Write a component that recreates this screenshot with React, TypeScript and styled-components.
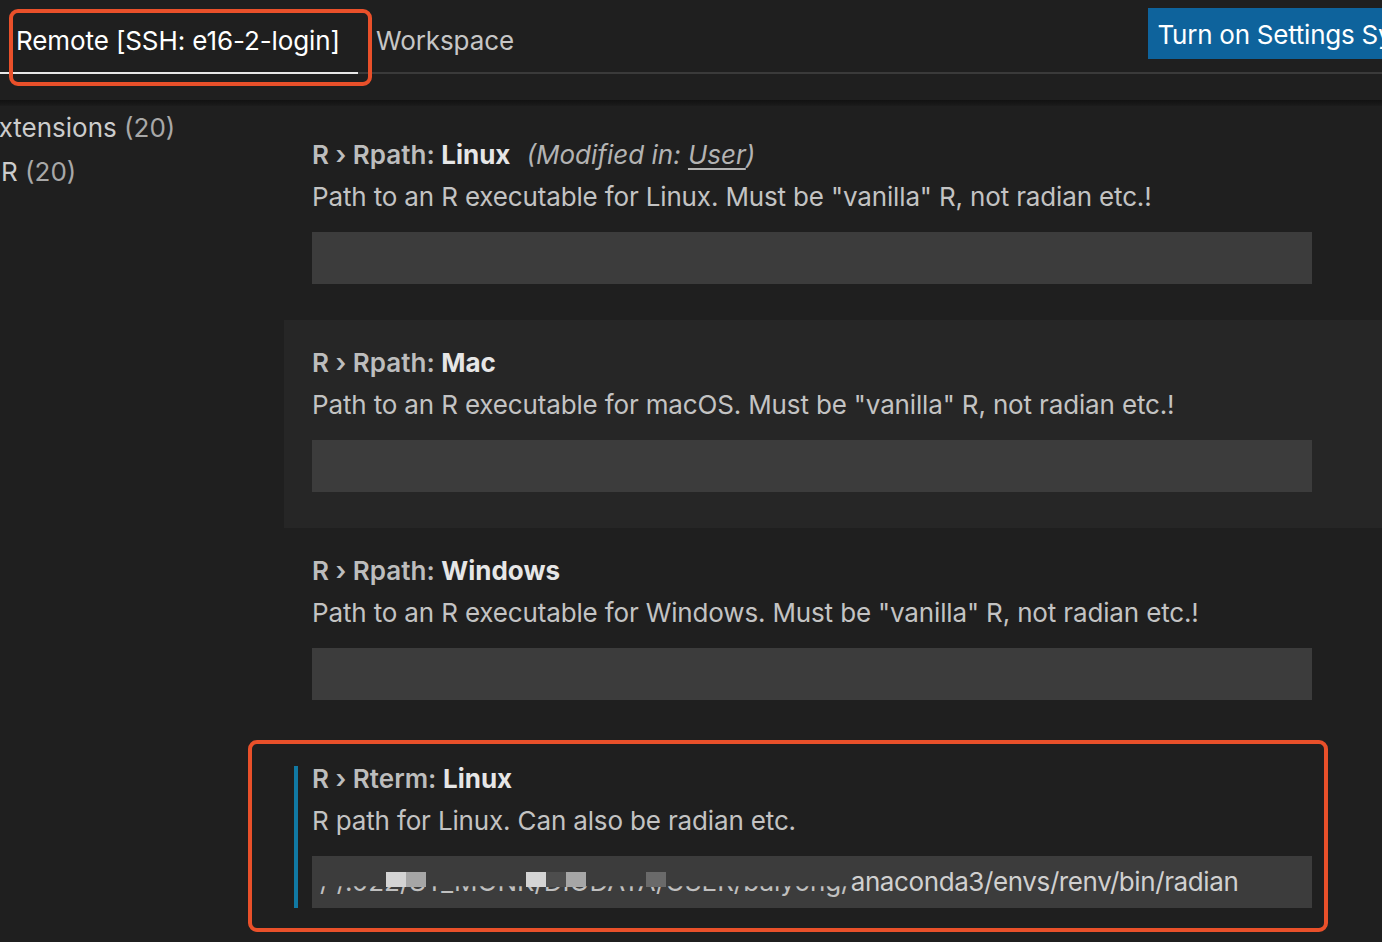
import React from "react";
import styled, { createGlobalStyle } from "styled-components";

const Global = createGlobalStyle`
  html, body { margin: 0; padding: 0; background: #1f1f1f; overflow: hidden; }
  body { font-family: Inter, "Noto Sans", sans-serif; -webkit-font-smoothing: antialiased; }
  #root { width: 1382px; height: 942px; position: relative; overflow: hidden; }
`;

const Page = styled.div`
  width: 1382px;
  height: 942px;
  position: relative;
  overflow: hidden;
  background: #1f1f1f;
  color: #cccccc;
  font-size: 26px;
`;

const Header = styled.div`
  height: 100px;
  display: flex;
  flex-direction: column;
`;

const TabBar = styled.div`
  width: 1432px;
  height: 72px;
  display: flex;
  align-items: stretch;
  border-bottom: 2px solid #3a3a3a;
`;

const Tab = styled.div<{ $active?: boolean }>`
  box-sizing: border-box;
  padding: 25px ${(p) => (p.$active ? "18px" : "0")} 0 ${(p) => (p.$active ? "16px" : "18px")};
  width: ${(p) => (p.$active ? "358px" : "auto")};
  line-height: 32px;
  color: ${(p) => (p.$active ? "#ffffff" : "#c6c6c6")};
  border-bottom: 2px solid ${(p) => (p.$active ? "#e8e8e8" : "transparent")};
  margin-bottom: -2px;
  white-space: nowrap;
  letter-spacing: -0.1px;
`;

const SyncButton = styled.div`
  margin-left: auto;
  margin-top: 8px;
  align-self: flex-start;
  flex: none;
  height: 51px;
  padding: 0 10px;
  background: #0e639c;
  color: #ffffff;
  line-height: 53px;
  white-space: nowrap;
  letter-spacing: -0.25px;
`;

const Shadow = styled.div`
  height: 6px;
  background: linear-gradient(#121212, #171717 60%, #1c1c1c);
`;

const Body = styled.div`
  display: flex;
  height: 836px;
`;

const Toc = styled.div`
  width: 284px;
  flex: none;
  overflow: hidden;
`;

const TocItem = styled.div<{ $indent: number }>`
  line-height: 44px;
  margin-left: ${(p) => p.$indent}px;
  white-space: nowrap;
  color: #cccccc;
`;

const Count = styled.span`
  color: #a8a8a8;
`;

const List = styled.div`
  flex: 1;
  display: flex;
  flex-direction: column;
  padding-top: 6px;
`;

const Item = styled.div<{ $hover?: boolean }>`
  height: 208px;
  box-sizing: border-box;
  padding: 28px 0 36px 0;
  display: flex;
  background: ${(p) => (p.$hover ? "#262626" : "transparent")};
`;

const FocusBar = styled.div<{ $on?: boolean }>`
  flex: none;
  width: 4px;
  margin: 2px 14px 0 10px;
  background: ${(p) => (p.$on ? "#1179a3" : "transparent")};
`;

const Content = styled.div`
  display: flex;
  flex-direction: column;
`;

const Title = styled.div`
  line-height: 30px;
  white-space: nowrap;
`;

const Category = styled.span`
  font-weight: 600;
  color: #bdbdbd;
`;

const Label = styled.span`
  font-weight: 700;
  color: #e6e6e6;
`;

const Modified = styled.span`
  font-style: italic;
  color: #b3b3b3;
  margin-left: 16px;
`;

const Link = styled.span`
  text-decoration: underline;
  text-underline-offset: 4px;
`;

const Desc = styled.div`
  margin-top: 12px;
  line-height: 30px;
  color: #c3c3c3;
  white-space: nowrap;
  letter-spacing: -0.15px;
`;

const Input = styled.div`
  margin-top: 20px;
  width: 1000px;
  height: 52px;
  box-sizing: border-box;
  background: #3c3c3c;
  color: #d0d0d0;
  padding: 0 8px;
  line-height: 52px;
  white-space: nowrap;
  position: relative;
  overflow: hidden;
  display: flex;
  letter-spacing: -0.4px;
`;

const Hidden = styled.span`
  color: #c0c0c0;
  clip-path: inset(58% 0 0 0);
  letter-spacing: 0;
`;

const Block = styled.span<{ $x: number; $w: number; $c: string }>`
  position: absolute;
  left: ${(p) => p.$x}px;
  top: 16px;
  width: ${(p) => p.$w}px;
  height: 15px;
  background: ${(p) => p.$c};
`;

const Annot = styled.div<{ $x: number; $y: number; $w: number; $h: number }>`
  position: absolute;
  left: ${(p) => p.$x}px;
  top: ${(p) => p.$y}px;
  width: ${(p) => p.$w}px;
  height: ${(p) => p.$h}px;
  box-sizing: border-box;
  border: 4px solid #e9502a;
  border-radius: 9px;
  pointer-events: none;
`;

type Setting = {
  cat: string;
  label: string;
  desc: string;
  modified?: boolean;
  hover?: boolean;
  focus?: boolean;
  value?: boolean;
};

const settings: Setting[] = [
  { cat: "R › Rpath: ", label: "Linux", desc: 'Path to an R executable for Linux. Must be "vanilla" R, not radian etc.!', modified: true },
  { cat: "R › Rpath: ", label: "Mac", desc: 'Path to an R executable for macOS. Must be "vanilla" R, not radian etc.!', hover: true },
  { cat: "R › Rpath: ", label: "Windows", desc: 'Path to an R executable for Windows. Must be "vanilla" R, not radian etc.!' },
  { cat: "R › Rterm: ", label: "Linux", desc: "R path for Linux. Can also be radian etc.", focus: true, value: true },
];

const blocks = [
  { x: 74, w: 20, c: "#d4d4d4" },
  { x: 94, w: 20, c: "#a6a6a6" },
  { x: 214, w: 20, c: "#d4d4d4" },
  { x: 234, w: 20, c: "#4d4d4d" },
  { x: 254, w: 20, c: "#a6a6a6" },
  { x: 334, w: 20, c: "#6a6a6a" },
];

export default function App() {
  return (
    <Page>
      <Global />
      <Header>
        <TabBar>
          <Tab $active>Remote [SSH: e16-2-login]</Tab>
          <Tab>Workspace</Tab>
          <SyncButton>Turn on Settings Sync</SyncButton>
        </TabBar>
      </Header>
      <Shadow />
      <Body>
        <Toc>
          <TocItem $indent={-17}>
            Extensions <Count>(20)</Count>
          </TocItem>
          <TocItem $indent={1}>
            R <Count>(20)</Count>
          </TocItem>
        </Toc>
        <List>
          {settings.map((s, i) => (
            <Item key={i} $hover={s.hover}>
              <FocusBar $on={s.focus} />
              <Content>
                <Title>
                  <Category>{s.cat}</Category>
                  <Label>{s.label}</Label>
                  {s.modified && (
                    <Modified>
                      (Modified in: <Link>User</Link>)
                    </Modified>
                  )}
                </Title>
                <Desc>{s.desc}</Desc>
                <Input>
                  {s.value && (
                    <>
                      <Hidden>/ /.022/ST_MONK/DIODATA/USER/baiyong/</Hidden>
                      <span>anaconda3/envs/renv/bin/radian</span>
                      {blocks.map((b, j) => (
                        <Block key={j} $x={b.x} $w={b.w} $c={b.c} />
                      ))}
                    </>
                  )}
                </Input>
              </Content>
            </Item>
          ))}
        </List>
      </Body>
      <Annot $x={9} $y={9} $w={363} $h={77} />
      <Annot $x={248} $y={740} $w={1080} $h={192} />
    </Page>
  );
}
